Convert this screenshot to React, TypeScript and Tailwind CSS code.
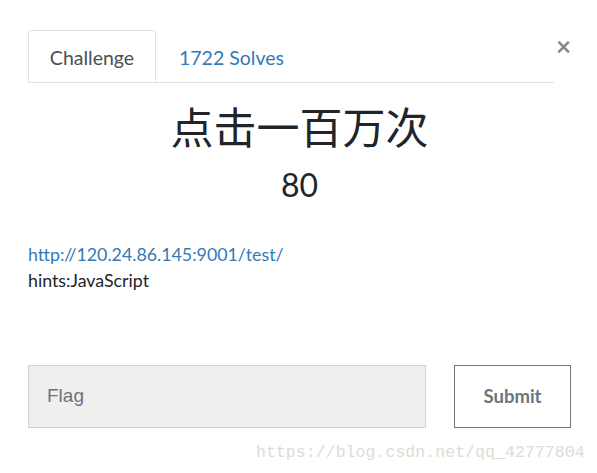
import React from "react";

export default function App() {
  return (
    <div
      className="w-[597px] h-[473px] bg-white relative overflow-hidden"
      style={{ fontFamily: "Lato, 'Noto Sans CJK SC', sans-serif" }}
    >
      <div className="pt-[30px] pl-[28px] pr-[26px]">
        <div className="flex items-start">
          <ul className="flex w-[526px] border-b border-[#dee2e6]">
            <li className="w-[128px] h-[52px] -mb-px pt-[3px] flex items-center justify-center border border-[#dee2e6] border-b-white rounded-t-[4px] bg-white text-[19.5px] text-[#495057]">
              Challenge
            </li>
            <li className="h-[52px] pt-[3px] pl-[23px] flex items-center text-[19.5px] text-[#337ab7]">
              1722 Solves
            </li>
          </ul>
          <button className="ml-auto mt-[3px] text-[#888] text-[26px] leading-none font-bold">
            ×
          </button>
        </div>

        <div className="flex flex-col items-center text-[#212529]">
          <h1
            className="mt-[18px] text-[43px] leading-[48px]"
            style={{ fontFamily: "'Noto Sans CJK SC', sans-serif" }}
          >
            点击一百万次
          </h1>
          <div className="mt-[16px] text-[32px] leading-[40px]">80</div>
        </div>

        <div className="mt-[36px] text-[17.8px] leading-[26px]">
          <a className="text-[#337ab7]" href="#">
            http://120.24.86.145:9001/test/
          </a>
          <div className="text-[#212529]">hints:JavaScript</div>
        </div>

        <div className="mt-[72px] flex gap-[28px]">
          <div
            className="w-[398px] h-[63px] bg-[#efefef] border border-[#cfd2d6] flex items-center pl-[18px] text-[19px] text-[#6c757d]"
            style={{ fontFamily: "'Liberation Sans', Arial, sans-serif" }}
          >
            Flag
          </div>
          <button className="w-[117px] h-[63px] border border-[#6c757d] text-[#6c757d] text-[18.5px] font-bold">
            Submit
          </button>
        </div>
      </div>

      <div
        className="absolute left-[256px] top-[441px] text-[16.6px] text-[#dedcd4]"
        style={{ fontFamily: "'Liberation Mono', monospace" }}
      >
        https://blog.csdn.net/qq_42777804
      </div>
    </div>
  );
}
